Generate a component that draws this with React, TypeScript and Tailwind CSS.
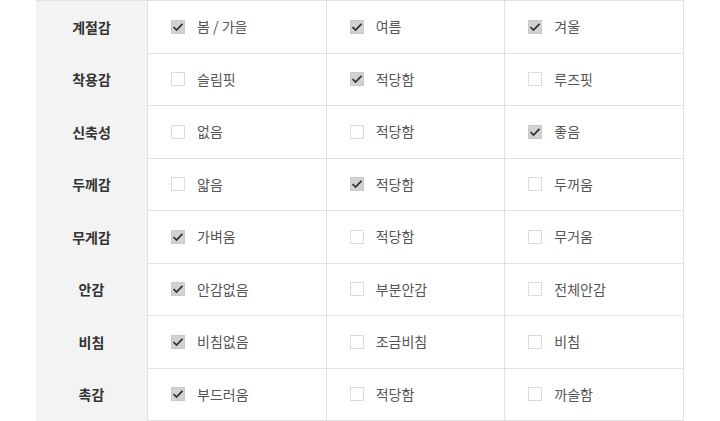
import React from "react";

type Row = { label: string; options: [string, boolean][] };

const rows: Row[] = [
  { label: "계절감", options: [["봄 / 가을", true], ["여름", true], ["겨울", true]] },
  { label: "착용감", options: [["슬림핏", false], ["적당함", true], ["루즈핏", false]] },
  { label: "신축성", options: [["없음", false], ["적당함", false], ["좋음", true]] },
  { label: "두께감", options: [["얇음", false], ["적당함", true], ["두꺼움", false]] },
  { label: "무게감", options: [["가벼움", true], ["적당함", false], ["무거움", false]] },
  { label: "안감", options: [["안감없음", true], ["부분안감", false], ["전체안감", false]] },
  { label: "비침", options: [["비침없음", true], ["조금비침", false], ["비침", false]] },
  { label: "촉감", options: [["부드러움", true], ["적당함", false], ["까슬함", false]] },
];

function Box({ checked }: { checked: boolean }) {
  if (checked) {
    return (
      <span className="flex h-[14px] w-[14px] shrink-0 items-center justify-center bg-[#d2d2d2] border border-[#c9c9c9]">
        <svg width="12" height="10" viewBox="0 0 12 10" fill="none">
          <path d="M1.5 5 L4.5 8 L10.5 1.8" stroke="#2f2f2f" strokeWidth="1.7" />
        </svg>
      </span>
    );
  }
  return <span className="block h-[14px] w-[14px] shrink-0 border border-[#dcdcdc] bg-white" />;
}

export default function App() {
  return (
    <div
      className="h-[421px] w-[720px] overflow-hidden bg-white"
      style={{ fontFamily: '"Noto Sans CJK KR", "Noto Sans", sans-serif' }}
    >
      <div className="ml-[36px] w-[648px] border-t border-[#e2e2e2]">
        {rows.map((r, i) => (
          <div key={i} className="flex h-[52.5px]">
            <div className="flex w-[112px] shrink-0 items-center justify-center bg-[#f3f3f3] border-r border-[#dedede] text-[14px] font-bold text-[#333]">
              {r.label}
            </div>
            {r.options.map(([t, c], j) => (
              <div
                key={j}
                className="flex flex-1 items-center gap-[12px] pl-[23px] border-b border-r border-[#e2e2e2]"
              >
                <Box checked={c} />
                <span className="text-[14px] text-[#555]">{t}</span>
              </div>
            ))}
          </div>
        ))}
      </div>
    </div>
  );
}
